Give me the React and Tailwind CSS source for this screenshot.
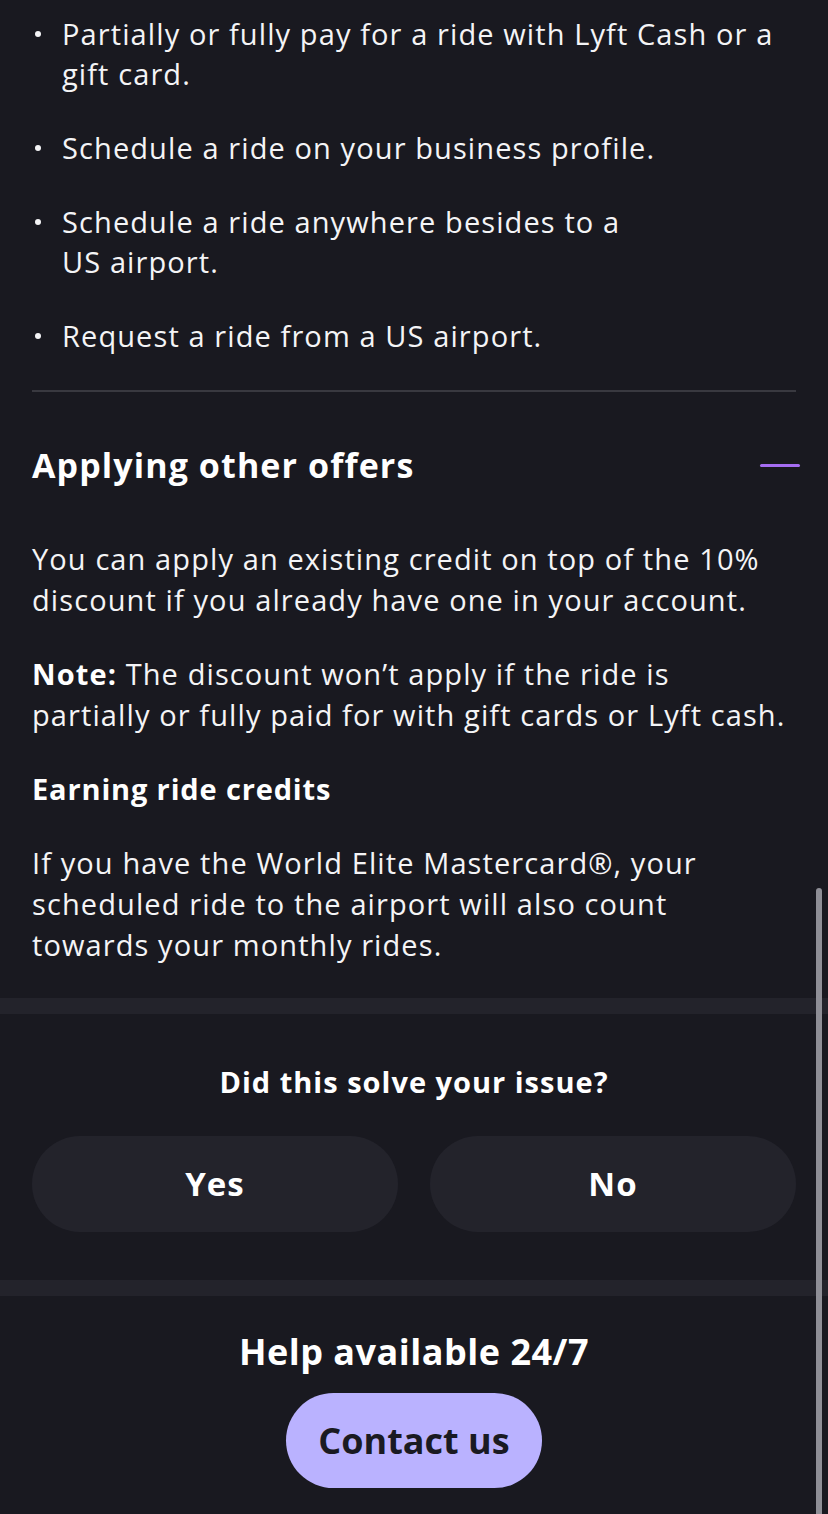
export default function App() {
  const font = { fontFamily: "'Open Sans', sans-serif" };
  const items = [
    ["Partially or fully pay for a ride with Lyft Cash or a", "gift card."],
    ["Schedule a ride on your business profile."],
    ["Schedule a ride anywhere besides to a", "US airport."],
    ["Request a ride from a US airport."],
  ];
  return (
    <div className="relative min-h-[1514px] w-[828px] overflow-hidden bg-[#191920] text-[#f4f4f6]" style={font}>
      <div className="px-8 pt-[14px]">
        <ul className="flex flex-col gap-[34px]">
          {items.map((t, i) => (
            <li key={i} className="flex text-[29px] leading-[40px] tracking-[1.1px]">
              <span className="flex h-[40px] w-[30px] shrink-0 items-center pl-[3px]">
                <span className="h-[6px] w-[6px] rounded-full bg-[#f4f4f6]" />
              </span>
              <span>
                {t.map((l, j) => (
                  <span key={j} className="block whitespace-nowrap">{l}</span>
                ))}
              </span>
            </li>
          ))}
        </ul>
        <div className="mt-[34px] h-[2px] bg-[#393940]" />
        <div className="mt-[53px] flex items-center justify-between">
          <h2 className="text-[34px] font-bold leading-[40px] tracking-[1.1px] text-white">Applying other offers</h2>
          <div className="mr-[-4px] h-[3px] w-[40px] rounded-full bg-[#a56df2]" />
        </div>
        <div className="mt-[53px] flex flex-col gap-[33px] text-[29px] leading-[41px] tracking-[1.1px]">
          <p>
            <span className="block whitespace-nowrap">You can apply an existing credit on top of the 10%</span>
            <span className="block whitespace-nowrap">discount if you already have one in your account.</span>
          </p>
          <p>
            <span className="block whitespace-nowrap">
              <span className="font-bold text-white">Note:</span> The discount won’t apply if the ride is
            </span>
            <span className="block whitespace-nowrap">partially or fully paid for with gift cards or Lyft cash.</span>
          </p>
          <p className="font-bold tracking-[0.85px] text-white">Earning ride credits</p>
          <p>
            <span className="block whitespace-nowrap">If you have the World Elite Mastercard®, your</span>
            <span className="block whitespace-nowrap">scheduled ride to the airport will also count</span>
            <span className="block whitespace-nowrap">towards your monthly rides.</span>
          </p>
        </div>
      </div>
      <div className="mt-[33px] h-[16px] bg-[#23232b]" />
      <div className="px-8">
        <p className="mt-[48px] text-center text-[29px] font-bold leading-[40px] tracking-[1px] text-white">Did this solve your issue?</p>
        <div className="mt-[34px] grid grid-cols-2 gap-8">
          <button className="h-[96px] rounded-full bg-[#23232b] text-[33px] font-bold tracking-[1px] text-white">Yes</button>
          <button className="h-[96px] rounded-full bg-[#23232b] text-[33px] font-bold tracking-[1px] text-white">No</button>
        </div>
      </div>
      <div className="mt-[48px] h-[16px] bg-[#23232b]" />
      <div className="flex flex-col items-center">
        <p className="mt-[34px] text-[36px] font-bold leading-[44px] tracking-[0.5px] text-white">Help available 24/7</p>
        <button className="mt-[19px] h-[95px] w-[256px] rounded-full bg-[#bab2ff] text-[36px] font-bold text-[#1a1a22]">Contact us</button>
      </div>
      <div className="absolute left-[816px] top-[888px] h-[626px] w-[6px] rounded-t-full bg-[#8e8e96]" />
    </div>
  );
}
